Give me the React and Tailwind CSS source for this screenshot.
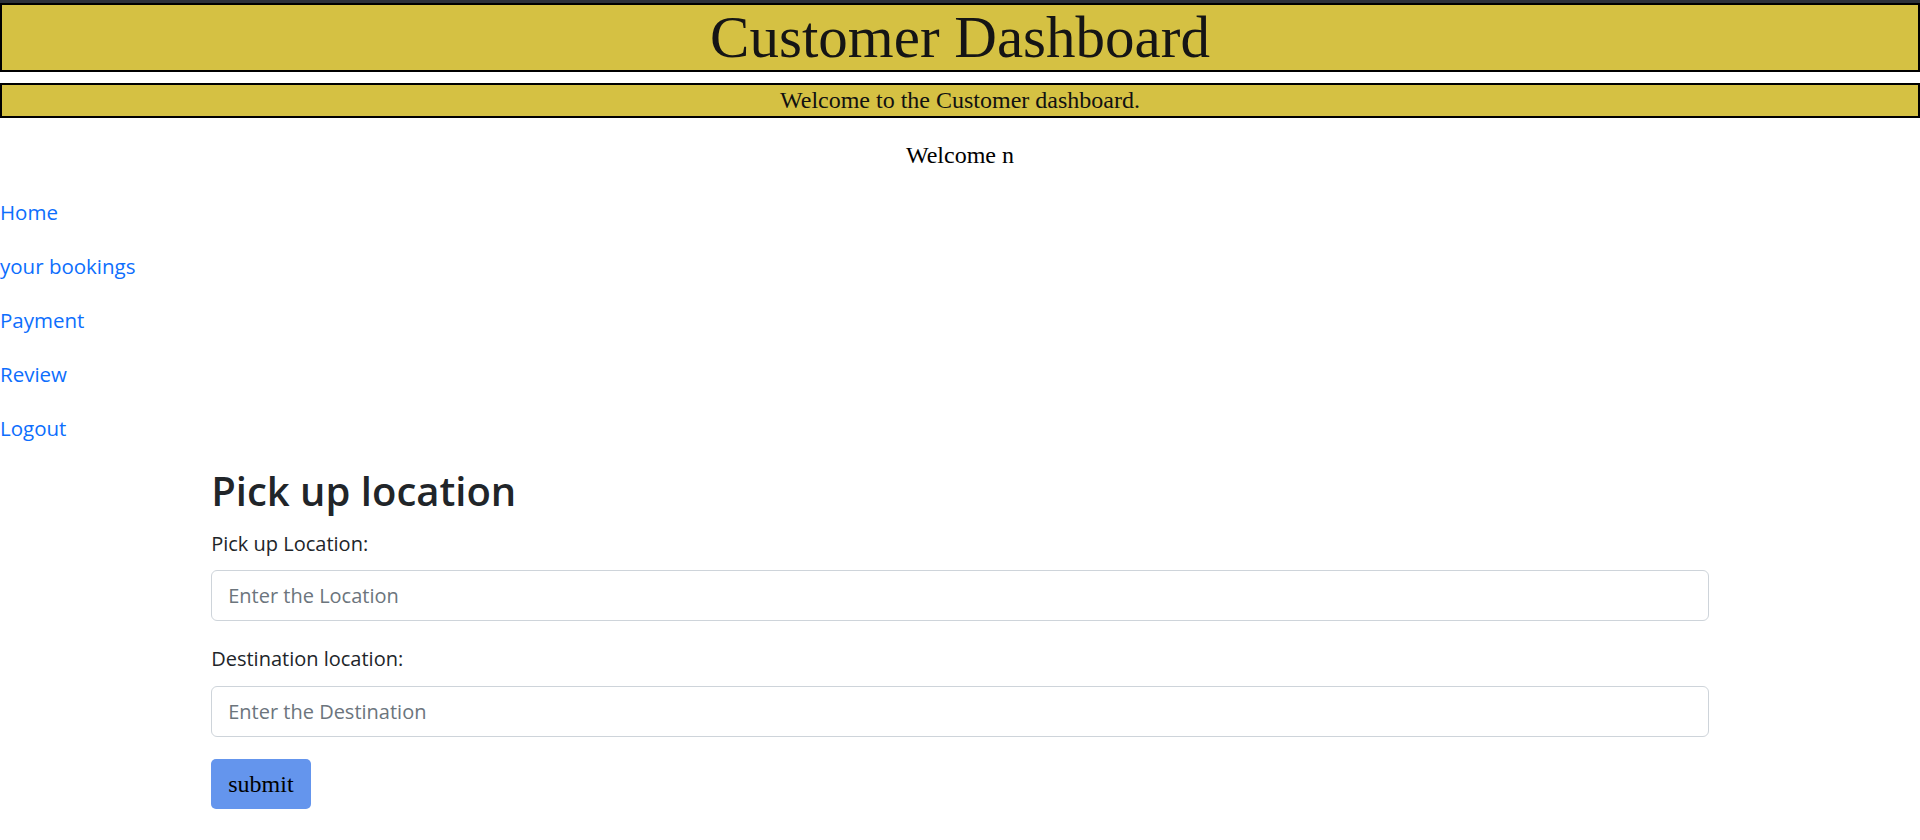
import React from 'react';

const serif = "font-['Liberation_Serif','Times_New_Roman',serif]";
const sans = "font-['Open_Sans','Noto_Sans',sans-serif]";

const links = ['Home', 'your bookings', 'Payment', 'Review', 'Logout'];

const App = () => {
  return (
    <div className="min-h-screen bg-white">
      {/* Top banner */}
      <div className="h-[3px] bg-[#2d313a]" />
      <header className="h-[69px] border-2 border-black bg-[#d5c143] flex items-center justify-center">
        <h1 className={`${serif} text-[59px] leading-[65px] text-[#151515]`}>Customer Dashboard</h1>
      </header>

      <div className="mt-[11px] h-[35px] border-2 border-black bg-[#d5c143] flex items-center justify-center">
        <p className={`${serif} text-[24px] leading-[29px] text-[#111]`}>Welcome to the Customer dashboard.</p>
      </div>

      <p className={`${serif} mt-[19px] text-center text-[24px] leading-[36px] text-black`}>Welcome n</p>

      {/* Side links */}
      <nav className={`${sans} mt-[24px] flex flex-col gap-6 items-start`}>
        {links.map((l) => (
          <a key={l} href="#" className="text-[20.5px] leading-[30px] text-[#0d6efd]">
            {l}
          </a>
        ))}
      </nav>

      {/* Pick up form */}
      <form className={`${sans} mx-auto w-[78%] mt-[24px] text-[#212529]`} onSubmit={(e) => e.preventDefault()}>
        <h1 className="text-[40px] leading-[48px] font-semibold">Pick up location</h1>

        <label className="block mt-[14px] text-[20px] leading-[30px]">Pick up Location:</label>
        <input
          type="text"
          placeholder="Enter the Location"
          className="mt-[11px] block w-full h-[51px] border border-[#ced4da] rounded-md px-4 text-[20px] outline-none placeholder:text-[#6c757d]"
        />

        <label className="block mt-[23px] text-[20px] leading-[30px]">Destination location:</label>
        <input
          type="text"
          placeholder="Enter the Destination"
          className="mt-[12px] block w-full h-[51px] border border-[#ced4da] rounded-md px-4 text-[20px] outline-none placeholder:text-[#6c757d]"
        />

        <button
          type="submit"
          className={`${serif} mt-[22px] h-[50px] px-[17px] bg-[#6495ed] rounded-[5px] text-[24px] text-black`}
        >
          submit
        </button>
      </form>
    </div>
  );
};

export default App;
